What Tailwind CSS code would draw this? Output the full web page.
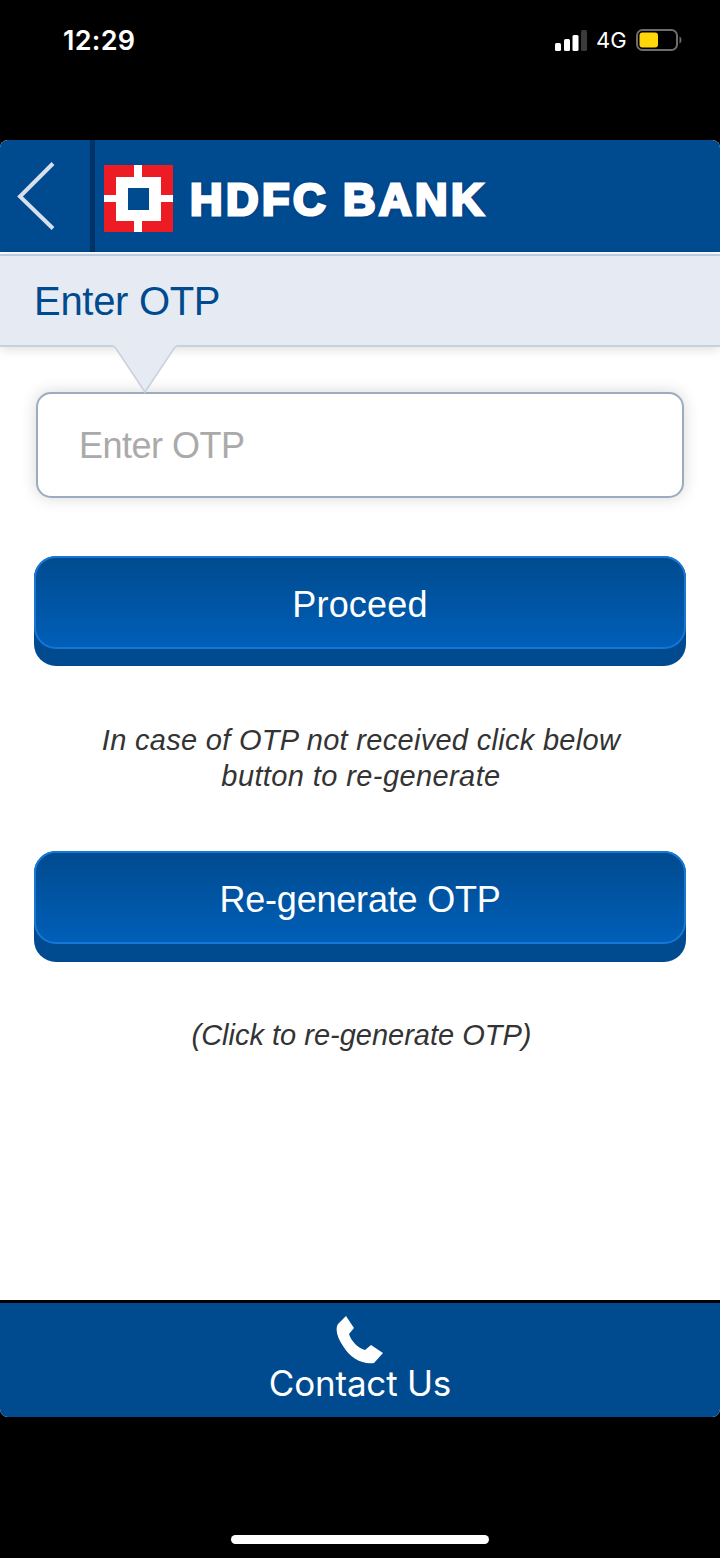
<!DOCTYPE html>
<html lang="en">
<head>
  <meta charset="UTF-8" />
  <meta name="viewport" content="width=device-width, initial-scale=1.0" />
  <title>HDFC Bank - Enter OTP</title>
  <script src="https://cdn.jsdelivr.net/npm/@tailwindcss/browser@4"></script>
</head>
<body class="w-[720px] h-[1558px] overflow-hidden bg-black flex flex-col font-['Liberation_Sans',Arial,sans-serif]">

  <!-- Status bar -->
  <div class="h-[140px] shrink-0 flex items-start justify-between pl-[63px] pr-[38px] pt-[22px] text-white">
    <span class="pt-px font-['Inter',sans-serif] text-[27px] leading-9 font-semibold tracking-[0.3px]">12:29</span>
    <div class="flex items-center h-9">
      <svg class="w-8 h-[21px]" viewBox="0 0 32 21">
        <rect x="0" y="13" width="6" height="8" rx="1.5" fill="#fff" />
        <rect x="9" y="9" width="6" height="12" rx="1.5" fill="#fff" />
        <rect x="17.5" y="5" width="6" height="16" rx="1.5" fill="#fff" />
        <rect x="26" y="0" width="6" height="21" rx="1.5" fill="#3a3a3a" />
      </svg>
      <span class="ml-[9px] w-[32px] font-['Inter',sans-serif] text-[22px] leading-9 whitespace-nowrap">4G</span>
      <svg class="ml-2 w-[46px] h-[22px]" viewBox="0 0 46 22">
        <rect x="1" y="1" width="40" height="20" rx="5.5" fill="none" stroke="#6d6d6d" stroke-width="2" />
        <rect x="3.5" y="3.5" width="18.5" height="15" rx="3" fill="#ffd60a" />
        <path d="M43.5 7.5c2.6 1.2 2.6 5.8 0 7z" fill="#6d6d6d" />
      </svg>
    </div>
  </div>

  <!-- App -->
  <div class="h-[1277px] shrink-0 flex flex-col bg-white rounded-[8px] overflow-hidden">
    <header class="h-[112px] shrink-0 flex items-center bg-[#004b8f]">
      <button class="w-[90px] h-full flex items-center pl-[17px]">
        <svg class="w-[38px] h-[68px]" viewBox="0 0 38 68" fill="none" stroke="#d5e0eb" stroke-width="4">
          <path d="M36 1.500L3 34.500l33 32" />
        </svg>
      </button>
      <div class="w-[5px] h-full bg-[#003366]"></div>
      <svg class="ml-[9px] mt-[5px] w-[69px] h-[67px]" viewBox="0 0 69 67">
        <rect width="69" height="67" fill="#ed1c24" />
        <path d="M30 0h8v67h-8zM0 30h69v7H0z" fill="#fff" />
        <rect x="12" y="12" width="45" height="44" fill="#fff" />
        <rect x="24" y="23" width="21" height="22" fill="#004b8f" />
      </svg>
      <span class="ml-[17px] mt-[7px] text-[45px] leading-[50px] font-bold tracking-[3.5px] [word-spacing:-2px] text-white whitespace-nowrap [-webkit-text-stroke:3px_white] [text-shadow:0_0_3px_#002a7f,0_0_4px_#002a7f]">HDFC BANK</span>
    </header>

    <div class="mt-[2px] h-[93px] shrink-0 relative flex items-center pl-[34px] bg-[#e6ebf3] border-t-2 border-t-[#bccbe0] border-b-2 border-b-[#c9d0da] shadow-[0_2px_10px_rgba(0,0,0,0.14)]">
      <h1 class="pt-px text-[40px] leading-[48px] tracking-[-0.3px] text-[#004b8f]">Enter OTP</h1>
      <svg class="absolute left-[112px] top-[88px] z-10 w-[66px] h-[50px]" viewBox="0 0 66 50">
        <path d="M1 0h64v2l-2 1L33 48 3 3 1 2z" fill="#e6ebf3" />
        <path d="M1 2l2 1 30 45L63 3l2-1" fill="none" stroke="#c9d1dc" stroke-width="1.6" />
      </svg>
    </div>

    <main class="flex-1 flex flex-col items-center">
      <input type="text" placeholder="Enter OTP" class="mt-[45px] w-[648px] h-[106px] pl-[41px] pt-[2px] bg-white border-2 border-[#9cabc1] rounded-[15px] text-[36px] tracking-[-0.5px] placeholder:text-[#aaaaaa] shadow-[0_0_16px_rgba(0,0,0,0.16)]" />

      <button class="mt-[58px] w-[652px] h-[110px] rounded-[22px] bg-[#004b8f] flex flex-col">
        <span class="w-full h-[93px] flex items-center justify-center pt-[5px] rounded-[22px] border-2 border-[#1777d8] bg-linear-to-b from-[#004b8f] to-[#005fb8] text-[36px] text-white tracking-[0.2px]">Proceed</span>
      </button>

      <p class="mt-[56px] pl-[2px] text-[29px] leading-9 italic text-center text-[#333333] tracking-[0.3px]">In case of OTP not received click below<br /><span class="tracking-[0.4px]">button to re-generate</span></p>

      <button class="mt-[57px] w-[652px] h-[111px] rounded-[22px] bg-[#004b8f] flex flex-col">
        <span class="w-full h-[93px] flex items-center justify-center pt-[5px] rounded-[22px] border-2 border-[#1777d8] bg-linear-to-b from-[#004b8f] to-[#005fb8] text-[36px] text-white tracking-[-0.2px]">Re-generate OTP</span>
      </button>

      <p class="mt-[55px] pl-[3px] text-[29px] leading-9 italic text-center text-[#333333]">(Click to re-generate OTP)</p>
    </main>

    <footer class="h-[117px] shrink-0 flex flex-col items-center bg-[#004b8f] border-t-3 border-black">
      <svg class="mt-[13px] w-[48px] h-[48px]" viewBox="0 0 48 48" fill="#fff">
        <path d="M10 0L18 12L13 18C15 25 22 32 29 34L35 29L47 37L38 47C27 49 14 42 7 30C1 21-1 13 2 8Z" />
      </svg>
      <span class="mt-[-3px] font-['Inter',sans-serif] text-[35px] leading-[44px] tracking-[-0.2px] text-white">Contact Us</span>
    </footer>
  </div>

  <!-- Home indicator -->
  <div class="mt-[118px] mx-auto w-[258px] h-[9px] shrink-0 rounded-full bg-white"></div>

</body>
</html>
